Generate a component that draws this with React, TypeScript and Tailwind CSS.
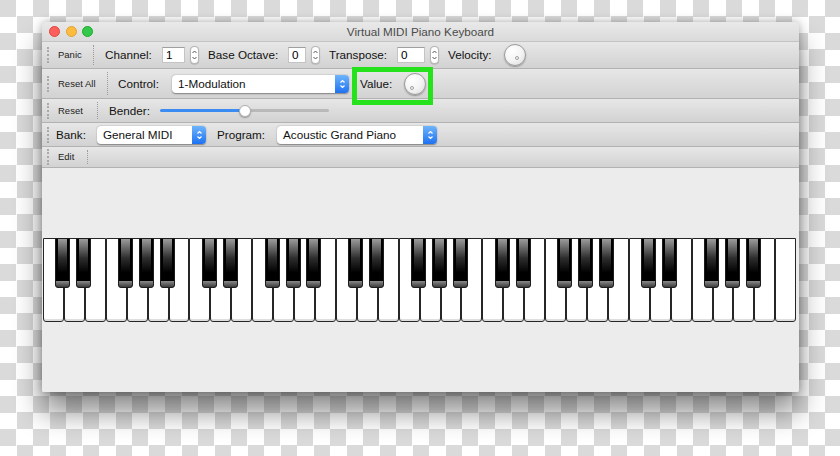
import { ReactNode } from "react";

const WHITE_KEYS = 36;
const KEY_W = 753 / WHITE_KEYS;
const BLACK_AFTER = [0, 1, 3, 4, 5];

function Grip() {
    return <div className="ml-[5px] h-[16px] w-0 shrink-0 border-l-2 border-dotted border-[#a9a9a9]" />;
}

function Sep() {
    return <div className="my-[3px] w-0 shrink-0 self-stretch border-l border-dotted border-[#9c9c9c]" />;
}

function Stepper() {
    return (
        <div className="ml-[5px] flex h-[18px] w-[9px] shrink-0 items-center justify-center rounded-[4px] border border-[#b4b4b4] bg-white shadow-[0_0.5px_1px_rgba(0,0,0,0.2)]">
            <svg width="7" height="14" viewBox="0 0 7 14" fill="none" stroke="#555" strokeWidth="1">
                <path d="M1.5 5 L3.5 3 L5.5 5" />
                <path d="M1.5 9 L3.5 11 L5.5 9" />
            </svg>
        </div>
    );
}

function SpinBox({ value, className }: { value: string; className: string }) {
    return (
        <div className={`flex h-[16px] shrink-0 items-center border border-[#c4c4c4] border-t-[#9f9f9f] bg-white pl-[3px] text-[11.7px] leading-none ${className}`}>
            {value}
        </div>
    );
}

function Combo({ text, className }: { text: string; className: string }) {
    return (
        <div className={`flex h-[18px] shrink-0 items-center rounded-[4px] bg-white shadow-[0_0.5px_1.5px_rgba(0,0,0,0.4)] ${className}`}>
            <span className="flex-1 pl-[6px] text-[11.7px] leading-none text-[#111]">{text}</span>
            <div className="flex h-full w-[14px] items-center justify-center rounded-r-[4px] bg-[linear-gradient(to_bottom,#6db4fb,#1e72f1)]">
                <svg width="7" height="14" viewBox="0 0 7 14" fill="none" stroke="#fff" strokeWidth="1.2">
                    <path d="M1.5 5.5 L3.5 3.5 L5.5 5.5" />
                    <path d="M1.5 8.5 L3.5 10.5 L5.5 8.5" />
                </svg>
            </div>
        </div>
    );
}

function Knob({ dot }: { dot: string }) {
    return (
        <div className="relative h-[22px] w-[22px] shrink-0 rounded-full border border-[#9a9a9a] bg-[radial-gradient(circle_at_35%_30%,#ffffff,#f4f4f4_50%,#d9d9d9)] shadow-[0_1px_1.5px_rgba(0,0,0,0.3)]">
            <div className={`absolute h-[4px] w-[4px] rounded-full border border-[#a0a0a0] ${dot}`} />
        </div>
    );
}

function Bar({ className, children }: { className: string; children: ReactNode }) {
    return (
        <div className={`flex shrink-0 items-center border-b border-[#b2b2b2] bg-[linear-gradient(to_bottom,#e7e7e7,#d2d2d2)] ${className}`}>
            {children}
        </div>
    );
}

function Keyboard() {
    const blacks: number[] = [];
    for (let i = 0; i < WHITE_KEYS - 1; i++) {
        if (BLACK_AFTER.includes(i % 7)) blacks.push((i + 1) * KEY_W - 8.5);
    }

    return (
        <div className="relative ml-[1px] mt-[70px] flex h-[84px] w-[753px]">
            {Array.from({ length: WHITE_KEYS }, (_, i) => (
                <div
                    key={i}
                    className="h-full flex-1 rounded-b-[3px] border border-[#262626] bg-white shadow-[inset_0_-2px_0_#dedede]"
                />
            ))}
            {blacks.map((left, i) => (
                <div
                    key={i}
                    className="absolute top-0 flex h-[50px] w-[15px] flex-col rounded-b-[3px] border border-[#1c1c1c] bg-black px-[2px]"
                    style={{ left }}
                >
                    <div className="flex-1 bg-[linear-gradient(to_bottom,#9c9c9c,#2e2e2e_45%,#000_80%)]" />
                    <div className="-mx-[2px] h-[6px] rounded-b-[2px] bg-[linear-gradient(to_bottom,#8a8a8a,#3c3c3c)]" />
                </div>
            ))}
        </div>
    );
}

export default function App() {
    const label = "shrink-0 text-[11.7px] leading-none text-[#111]";
    const small = "shrink-0 text-[9.5px] leading-none text-[#222]";

    return (
        <div className="h-[456px] w-[840px] overflow-hidden bg-[conic-gradient(#fff_25%,#dadada_0_50%,#fff_0_75%,#dadada_0)] bg-[length:33px_33px] pl-[42px] pt-[22px] font-['Liberation_Sans',Arial,sans-serif]">
            <div className="relative flex h-[370px] w-[757px] flex-col overflow-hidden rounded-t-[5px] rounded-b-[2px] bg-[#ececec] shadow-[0_20px_28px_rgba(0,0,0,0.45),0_0_8px_rgba(0,0,0,0.3)]">
                {/* title bar */}
                <div className="relative flex h-[19px] shrink-0 items-center bg-[linear-gradient(to_bottom,#e9e9e9,#dadada)]">
                    <div className="ml-[7px] flex gap-[5.5px]">
                        <div className="h-[11px] w-[11px] rounded-full border border-[#e0443e] bg-[#fc605c]" />
                        <div className="h-[11px] w-[11px] rounded-full border border-[#dea236] bg-[#fdbc40]" />
                        <div className="h-[11px] w-[11px] rounded-full border border-[#1aab29] bg-[#34c84a]" />
                    </div>
                    <div className="absolute inset-x-0 top-[4px] text-center text-[11.7px] leading-none text-[#4b4b4b]">
                        Virtual MIDI Piano Keyboard
                    </div>
                </div>

                <Bar className="h-[28px] border-t border-t-[#c4c4c4]">
                    <Grip />
                    <span className={`${small} ml-[9px] w-[35px]`}>Panic</span>
                    <Sep />
                    <span className={`${label} ml-[11px] w-[57px]`}>Channel:</span>
                    <SpinBox value="1" className="w-[23px]" />
                    <Stepper />
                    <span className={`${label} ml-[9px] w-[80px]`}>Base Octave:</span>
                    <SpinBox value="0" className="w-[18px]" />
                    <Stepper />
                    <span className={`${label} ml-[9px] w-[68px]`}>Transpose:</span>
                    <SpinBox value="0" className="w-[28px]" />
                    <Stepper />
                    <span className={`${label} ml-[9px] w-[56px]`}>Velocity:</span>
                    <Knob dot="left-[10px] top-[11px]" />
                </Bar>

                <Bar className="h-[30px]">
                    <Grip />
                    <span className={`${small} ml-[9px] w-[49px]`}>Reset All</span>
                    <Sep />
                    <span className={`${label} ml-[10px] w-[54px]`}>Control:</span>
                    <Combo text="1-Modulation" className="w-[177px]" />
                    <span className={`${label} ml-[11px] w-[44px]`}>Value:</span>
                    <Knob dot="left-[5px] top-[12px]" />
                </Bar>

                <Bar className="h-[24px]">
                    <Grip />
                    <span className={`${small} ml-[9px] w-[39px]`}>Reset</span>
                    <Sep />
                    <span className={`${label} ml-[11px] w-[51px]`}>Bender:</span>
                    <div className="relative flex h-[12px] w-[169px] shrink-0 items-center">
                        <div className="h-[3px] w-[85px] rounded-l-full bg-[#3b8cf2]" />
                        <div className="h-[3px] flex-1 rounded-r-full bg-[#b9b9b9]" />
                        <div className="absolute left-[79px] top-0 h-[12px] w-[12px] rounded-full border border-[#b0b0b0] bg-white shadow-[0_1px_1.5px_rgba(0,0,0,0.3)]" />
                    </div>
                </Bar>

                <Bar className="h-[24px]">
                    <Grip />
                    <span className={`${label} ml-[7px] w-[41px]`}>Bank:</span>
                    <Combo text="General MIDI" className="w-[109px]" />
                    <span className={`${label} ml-[11px] w-[60px]`}>Program:</span>
                    <Combo text="Acoustic Grand Piano" className="w-[160px]" />
                </Bar>

                <Bar className="h-[21px]">
                    <Grip />
                    <span className={`${small} ml-[9px] w-[29px]`}>Edit</span>
                    <Sep />
                </Bar>

                <div className="flex-1 bg-[#ececec]">
                    <Keyboard />
                </div>

                {/* highlight annotation */}
                <div className="absolute left-[310px] top-[45px] h-[38px] w-[81px] border-[5px] border-[#26e21c]" />
            </div>
        </div>
    );
}
